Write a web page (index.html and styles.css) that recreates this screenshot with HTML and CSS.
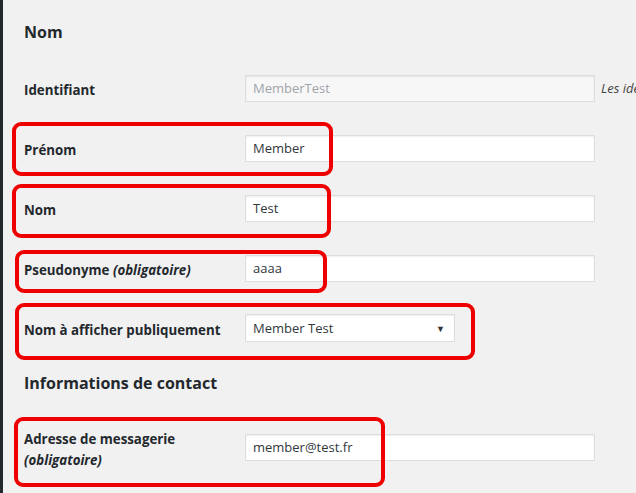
FILE: index.html
```html
<!DOCTYPE html>
<html lang="fr">
<head>
    <meta charset="UTF-8">
    <title>Profil</title>
    <link rel="stylesheet" href="styles.css">
</head>
<body>
    <div class="wrap">
        <h2>Nom</h2>

        <!-- Identifiant -->
        <div class="row row-login">
            <label for="user_login">Identifiant</label>
            <input type="text" id="user_login" class="regular-text" value="MemberTest" disabled>
            <span class="description">Les ide</span>
        </div>

        <!-- Prénom -->
        <div class="row">
            <span class="mark mark-first"></span>
            <label for="first_name">Prénom</label>
            <input type="text" id="first_name" class="regular-text" value="Member">
        </div>

        <!-- Nom -->
        <div class="row">
            <span class="mark mark-last"></span>
            <label for="last_name">Nom</label>
            <input type="text" id="last_name" class="regular-text" value="Test">
        </div>

        <!-- Pseudonyme -->
        <div class="row">
            <span class="mark mark-nick"></span>
            <label for="nickname">Pseudonyme <em>(obligatoire)</em></label>
            <input type="text" id="nickname" class="regular-text" value="aaaa">
        </div>

        <!-- Nom public -->
        <div class="row">
            <span class="mark mark-display"></span>
            <label for="display_name">Nom à afficher publiquement</label>
            <div class="select">
                <span>Member Test</span>
                <span class="arrow">&#9660;</span>
            </div>
        </div>

        <h2 class="contact">Informations de contact</h2>

        <!-- Email -->
        <div class="row row-email">
            <span class="mark mark-email"></span>
            <label for="email">Adresse de messagerie<br><em>(obligatoire)</em></label>
            <input type="text" id="email" class="regular-text" value="member@test.fr">
        </div>
    </div>
</body>
</html>
```

FILE: styles.css
```css
/* General */
html, body {
    margin: 0;
    padding: 0;
    height: 100%;
    overflow: hidden;
}

body {
    background-color: #f1f1f1;
    border-left: 3px solid #23282d;
    font-family: "Open Sans", Arial, sans-serif;
    font-size: 14px;
    color: #23282d;
}

.wrap {
    padding-left: 21px;
}

h2 {
    margin: 20px 0 0;
    font-size: 16px;
    line-height: 24px;
    font-weight: 700;
    color: #23282d;
}

h2.contact {
    margin-top: 13px;
}

/* Rows */
.row {
    position: relative;
    display: flex;
    align-items: center;
    height: 60px;
    white-space: nowrap;
}

.row-login {
    margin-top: 14px;
}

.row label {
    width: 221px;
    flex-shrink: 0;
    font-size: 13.3px;
    font-weight: 700;
    line-height: 21px;
    position: relative;
    top: 2px;
}

.row label em {
    font-style: italic;
}

.row-email {
    height: auto;
    padding: 31px 0 20px;
}

.row-email label {
    top: 3px;
}

/* Inputs */
input.regular-text {
    box-sizing: border-box;
    flex-shrink: 0;
    width: 350px;
    height: 27px;
    margin: 0;
    padding: 3px 7px;
    border: 1px solid #ddd;
    background: #fff;
    box-shadow: inset 0 1px 2px rgba(0, 0, 0, 0.07);
    font-family: "Open Sans", Arial, sans-serif;
    font-size: 13px;
    color: #32373c;
}

input.regular-text:disabled {
    background: #f7f7f7;
    color: #a0a5aa;
}

.description {
    margin-left: 6px;
    font-size: 13px;
    font-style: italic;
    color: #444;
}

.select {
    box-sizing: border-box;
    display: flex;
    align-items: center;
    justify-content: space-between;
    width: 210px;
    height: 28px;
    padding: 0 9px 0 7px;
    border: 1px solid #ddd;
    background: #fff;
    box-shadow: inset 0 1px 2px rgba(0, 0, 0, 0.07);
    font-size: 13px;
    color: #32373c;
}

.select .arrow {
    font-size: 9px;
    color: #333;
}

/* Red annotation boxes */
.mark {
    position: absolute;
    box-sizing: border-box;
    border: 4px solid #ee0000;
    border-radius: 9px;
}

.mark-first {
    left: -12px;
    top: 4px;
    width: 321px;
    height: 54px;
}

.mark-last {
    left: -12px;
    top: 6px;
    width: 319px;
    height: 54px;
}

.mark-nick {
    left: -9px;
    top: 12px;
    width: 312px;
    height: 43px;
}

.mark-display {
    left: -9px;
    top: 5px;
    width: 460px;
    height: 57px;
}

.mark-email {
    left: -10px;
    top: 22px;
    width: 371px;
    height: 70px;
}
```
